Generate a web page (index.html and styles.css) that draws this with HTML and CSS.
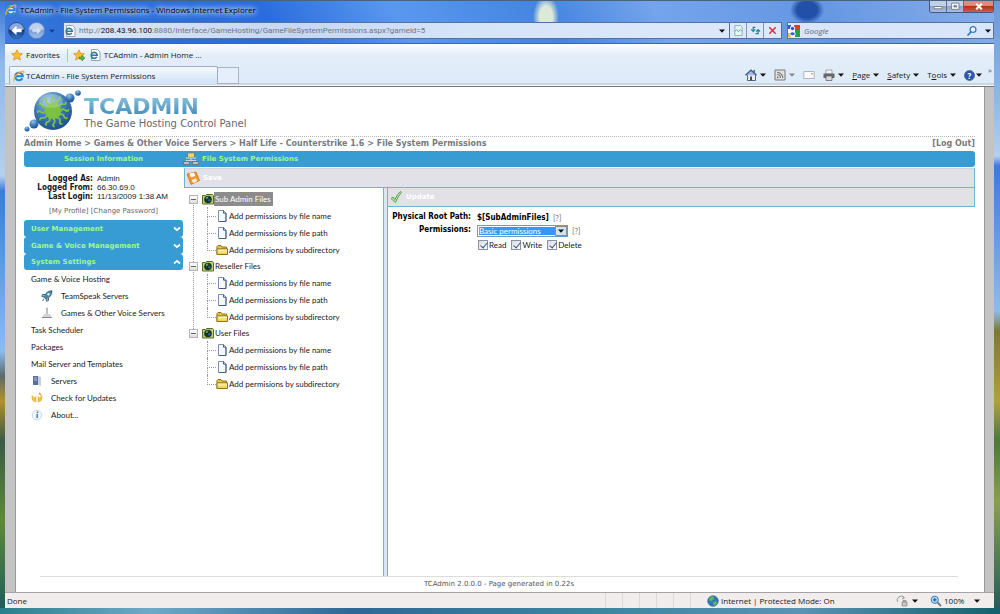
FILE: index.html
```html
<!DOCTYPE html>
<html lang="en">
<head>
    <meta charset="UTF-8">
    <meta name="viewport" content="width=device-width, initial-scale=1.0">
    <title>TCAdmin - File System Permissions</title>
    <link rel="stylesheet" href="styles.css">
</head>
<body>
    <svg class="sprite" aria-hidden="true">
        <defs>
            <linearGradient id="folderFill" x1="0" y1="0" x2="0" y2="1"><stop offset="0" stop-color="#fffbc0"/><stop offset="1" stop-color="#f0cc38"/></linearGradient>
            <radialGradient id="orb" cx=".4" cy=".25" r=".8"><stop offset="0" stop-color="#9cc4e6"/><stop offset=".5" stop-color="#3c7cb8"/><stop offset="1" stop-color="#1c4a88"/></radialGradient>
        </defs>
        <symbol id="i-ie" viewBox="0 0 12 12">
            <circle cx="6" cy="6.400" r="4.800" fill="#d8ecfc"/>
            <path d="M9.400 8.200A3.800 3.800 0 1 1 9.800 6.300H3.200" fill="none" stroke="#2a83d2" stroke-width="2"/>
            <path d="M1.300 11C-.6 8.800 5 1.800 9.400 1.100c1.800-.3 1.800 1.100 1 2.600" fill="none" stroke="#f0b428" stroke-width="1.200"/>
        </symbol>
        <symbol id="i-iepage" viewBox="0 0 12 12">
            <path d="M2.500.5h6L11 3v8.500H2.500z" fill="#fff" stroke="#9aa3ad"/>
            <path d="M7.800 7.900A3 3 0 1 1 8.200 6.300H2.400" fill="none" stroke="#2e7c98" stroke-width="1.600"/>
        </symbol>
        <symbol id="i-star" viewBox="0 0 12 12">
            <path d="M6 .8 7.600 4.300l3.800.4-2.800 2.600.8 3.800L6 9.200l-3.400 1.900.8-3.800L.6 4.700l3.800-.4z" fill="#fbc02d" stroke="#d98a1c" stroke-width=".7"/>
        </symbol>
        <symbol id="i-doc" viewBox="0 0 12 12">
            <path d="M2.500.5h5l2.500 2.700v8.300H2.500z" fill="#f4f8ff" stroke="#7c8faf"/>
            <path d="M7.500.5v2.700H10v8.300H3" fill="none" stroke="#4a5c84"/>
        </symbol>
        <symbol id="i-folder" viewBox="0 0 12 12">
            <path d="M1 10.500V2.500L2 1.500h3l1 1.500h4.500v2" fill="#e8c43c" stroke="#8a7420"/>
            <path d="M1 4.800h10.500v5.700H1z" fill="url(#folderFill)" stroke="#8a7420"/>
        </symbol>
        <symbol id="i-root" viewBox="0 0 12 12">
            <path d="M.5 2.500h3l1-1h6l1 1v8.500H.5z" fill="#c3cf6a" stroke="#5c6b2a"/>
            <circle cx="6" cy="6.500" r="3.800" fill="#14352a"/>
            <path d="M3.600 5q1.400-2 3-1.200l-.8 1.700-1.600.6z" fill="#4fb06c"/>
            <circle cx="7.300" cy="7.300" r="1.200" fill="#2c62a0"/>
        </symbol>
        <symbol id="i-down" viewBox="0 0 6 4"><path d="M0 .5h6L3 3.800z" fill="currentColor"/></symbol>
        <symbol id="i-chevron" viewBox="0 0 8 6"><path d="M1 1.500 4 4.200l3-2.700" fill="none" stroke="#fff" stroke-width="1.700"/></symbol>
    </svg>

    <div class="window">
        <header class="titlebar">
            <svg class="icon"><use href="#i-ie"/></svg>
            <span class="window-title">TCAdmin - File System Permissions - Windows Internet Explorer</span>
            <div class="window-controls">
                <button class="win-btn" aria-label="Minimize"><svg viewBox="0 0 10 8"><path d="M1.500 4h7v2h-7z" fill="#fff" stroke="#525c70" stroke-width=".6"/></svg></button>
                <button class="win-btn" aria-label="Maximize"><svg viewBox="0 0 10 8"><path d="M2 1h6.500v5.500H2zM4 3v1.500h2.500V3z" fill="#fff" fill-rule="evenodd" stroke="#525c70" stroke-width=".6"/></svg></button>
                <button class="win-btn win-close" aria-label="Close"><svg viewBox="0 0 10 8"><path d="m2.500 1.500 5 5m0-5-5 5" stroke="#fff" stroke-width="1.800"/></svg></button>
            </div>
        </header>

        <div class="navbar">
            <button class="round back" aria-label="Back"><svg viewBox="0 0 16 16"><path d="M2.500 8 8 3v3.200h5.500v3.600H8V13z" fill="#fff"/></svg></button>
            <button class="round forward" aria-label="Forward"><svg viewBox="0 0 16 16"><path d="M13 8 8.500 4v2.700h-5v2.600h5V12z" fill="#d5e1f1"/></svg></button>
            <svg class="caret nav-caret"><use href="#i-down"/></svg>
            <div class="address">
                <svg class="icon"><use href="#i-iepage"/></svg>
                <a class="url" href="#">http://<b>208.43.96.100</b>:8880/Interface/GameHosting/GameFileSystemPermissions.aspx?gameid=5</a>
                <svg class="caret"><use href="#i-down"/></svg>
            </div>
            <div class="address-buttons">
                <button aria-label="Compatibility View"><svg viewBox="0 0 12 12"><path d="M2 .5h6l2 2V11.500H2z" fill="#e9f4f5" stroke="#7fb0b6"/><path d="m2 7 2-2 2 2.500L8 5l2 2" fill="none" stroke="#5fa3a8"/></svg></button>
                <button aria-label="Refresh"><svg viewBox="0 0 12 12"><path d="M6 2.500H3.500v4M1.300 4.800l2.200 2.200 2.200-2.200M6 9.500h2.800v-4M6.600 7.200 8.800 5 11 7.200" fill="none" stroke="#2d7f95" stroke-width="1.300"/></svg></button>
                <button aria-label="Stop"><svg viewBox="0 0 12 12"><path d="m2.500 2.500 7 7m0-7-7 7" stroke="#d03438" stroke-width="1.600"/></svg></button>
            </div>
            <div class="searchbox">
                <svg class="icon" viewBox="0 0 12 12"><path d="M0 0h12v12H0z" fill="#fff"/><path d="M6 0h6v5H6z" fill="#d8402c"/><path d="M7 5h5v7H7z" fill="#28a048"/><path d="M0 0h3v4H0z" fill="#2c62d0"/><path d="M0 8h3v4H0z" fill="#f2bc20"/><circle cx="4.500" cy="3.500" r="2.200" fill="#2c62d0" stroke="#fff"/><ellipse cx="4.500" cy="8.800" rx="2.700" ry="2" fill="#2c62d0" stroke="#fff"/></svg>
                <input type="text" aria-label="Search" placeholder="Google">
                <svg class="icon" viewBox="0 0 12 12"><circle cx="7" cy="4.500" r="2.900" fill="#eef6ff" stroke="#3b78c4" stroke-width="1.300"/><path d="M5 6.800 1.500 10.500" stroke="#3b78c4" stroke-width="1.700"/></svg>
                <svg class="caret"><use href="#i-down"/></svg>
            </div>
        </div>

        <div class="client">
            <div class="toolbars">
                <div class="favorites">
                    <svg class="icon"><use href="#i-star"/></svg>
                    <a href="#">Favorites</a>
                    <span class="divider"></span>
                    <svg class="icon" viewBox="0 0 12 12"><use href="#i-star"/><path d="M6 8h3V6l3 3-3 3v-2H6z" fill="#54b848" stroke="#2f8a2c" stroke-width=".5"/></svg>
                    <svg class="icon"><use href="#i-iepage"/></svg>
                    <a href="#">TCAdmin - Admin Home ...</a>
                </div>
                <div class="tabrow">
                    <button class="tab"><svg class="icon"><use href="#i-ie"/></svg>TCAdmin - File System Permissions</button>
                    <button class="newtab" aria-label="New Tab"></button>
                    <div class="commands">
                        <button aria-label="Home"><svg class="icon" viewBox="0 0 12 12"><path d="M2.500 5.500v6h8v-6" fill="#e8edf5" stroke="#526691"/><path d="M8.500 3V1H10v3" fill="#526691"/><path d="M.5 6.200 6 1l5.500 5.200" fill="#a9b9d8" stroke="#39508a" stroke-width="1.200"/><path d="M5 7.500h2v4H5z" fill="#5d4a35"/></svg><svg class="caret"><use href="#i-down"/></svg></button>
                        <button aria-label="Feeds"><svg class="icon" viewBox="0 0 12 12"><path d="M1 1h10v10H1z" fill="#e2e2e2" stroke="#777"/><path d="M3 5.500A3.500 3.500 0 0 1 6.500 9M3 3.200A5.800 5.800 0 0 1 8.800 9" fill="none" stroke="#777" stroke-width="1.100"/><circle cx="3.700" cy="8.400" r=".9" fill="#777"/></svg><svg class="caret muted"><use href="#i-down"/></svg></button>
                        <button aria-label="Read Mail"><svg class="icon" viewBox="0 0 12 12"><path d="M.8 2.500h10.400v7H.8z" fill="#fafafa" stroke="#b4b4ba"/><path d="M8 4h2v1.500H8z" fill="#d9a890"/></svg></button>
                        <button aria-label="Print"><svg class="icon" viewBox="0 0 12 12"><path d="M3 1h6v4H3z" fill="#f4f4f4" stroke="#888" stroke-width=".7"/><path d="M.5 4.500h11V9H.5z" fill="#66696e"/><path d="M3 7h6v4.500H3z" fill="#d8dadd" stroke="#55585d" stroke-width=".7"/></svg><svg class="caret"><use href="#i-down"/></svg></button>
                        <button><span><u>P</u>age</span><svg class="caret"><use href="#i-down"/></svg></button>
                        <button><span><u>S</u>afety</span><svg class="caret"><use href="#i-down"/></svg></button>
                        <button><span>T<u>o</u>ols</span><svg class="caret"><use href="#i-down"/></svg></button>
                        <button class="help" aria-label="Help"><span class="help-ball">?</span><svg class="caret"><use href="#i-down"/></svg></button>
                        <span class="more">»</span>
                    </div>
                </div>
            </div>

            <div class="viewport">
                <div class="page">
                    <div class="brand">
                        <svg class="brand-mark" viewBox="0 0 58 43">
                            <circle cx="29" cy="22" r="19" fill="url(#orb)"/>
                            <circle cx="46" cy="9" r="4.500" fill="url(#orb)"/>
                            <circle cx="54" cy="4" r="2.800" fill="url(#orb)"/>
                            <circle cx="10" cy="35" r="4.500" fill="url(#orb)"/>
                            <circle cx="3" cy="40" r="2.500" fill="url(#orb)"/>
                            <circle cx="29" cy="22" r="8" fill="#7cc142"/>
                            <g fill="none" stroke="#7cc142" stroke-width="1.800" stroke-linecap="round">
                                <path id="ray" d="M29 14.500q-3-2-1-4.500t0-3.500"/>
                                <use href="#ray" transform="rotate(30 29 22)"/><use href="#ray" transform="rotate(60 29 22)"/><use href="#ray" transform="rotate(90 29 22)"/>
                                <use href="#ray" transform="rotate(120 29 22)"/><use href="#ray" transform="rotate(150 29 22)"/><use href="#ray" transform="rotate(180 29 22)"/>
                                <use href="#ray" transform="rotate(210 29 22)"/><use href="#ray" transform="rotate(240 29 22)"/><use href="#ray" transform="rotate(270 29 22)"/>
                                <use href="#ray" transform="rotate(300 29 22)"/><use href="#ray" transform="rotate(330 29 22)"/>
                            </g>
                            <ellipse cx="27" cy="12" rx="12" ry="7" fill="#fff" opacity=".2"/>
                        </svg>
                        <div class="brand-text">
                            <span class="brand-name">TCADMIN</span>
                            <span class="brand-sub">The Game Hosting Control Panel</span>
                        </div>
                    </div>

                    <div class="crumbs">
                        <nav><a href="#">Admin Home</a> &gt; <a href="#">Games &amp; Other Voice Servers</a> &gt; <a href="#">Half Life - Counterstrike 1.6</a> &gt; <a href="#">File System Permissions</a></nav>
                        <a href="#">[Log Out]</a>
                    </div>

                    <div class="headbar">
                        <h2 class="head-session">Session Information</h2>
                        <svg class="head-icon" viewBox="0 0 16 14"><path d="M8 6v3M3 11V8.500h10V11" fill="none" stroke="#c9d6dd"/><path d="M4.500.8h7v4.700h-7z" fill="#e6d85c" stroke="#6e7b80"/><path d="M3 6h10" stroke="#dfe5e8"/><path d="M.5 9.500h6v3h-6zM9.500 9.500h6v3h-6z" fill="#b9c1c8" stroke="#5f6c76" stroke-width=".8"/></svg>
                        <h1>File System Permissions</h1>
                    </div>

                    <div class="columns">
                        <aside class="sidebar">
                            <dl class="session">
                                <dt>Logged As:</dt><dd>Admin</dd>
                                <dt>Logged From:</dt><dd>66.30.69.0</dd>
                                <dt>Last Login:</dt><dd>11/13/2009 1:38 AM</dd>
                            </dl>
                            <p class="profile-links"><a href="#">[My Profile]</a> <a href="#">[Change Password]</a></p>
                            <button class="accordion">User Management<svg><use href="#i-chevron"/></svg></button>
                            <button class="accordion">Game &amp; Voice Management<svg><use href="#i-chevron"/></svg></button>
                            <button class="accordion open">System Settings<svg><use href="#i-chevron"/></svg></button>
                            <ul class="menu">
                                <li><a href="#">Game &amp; Voice Hosting</a></li>
                                <li class="sub"><a href="#"><svg viewBox="0 0 12 12"><path d="M11 .8C7 .8 4 3.500 3 7l2 2c3.500-1 6-4 6-8.200z" fill="#4d86a0" stroke="#27506a" stroke-width=".7"/><path d="M4 4.500H1.500L.8 6.500 3 7M7.500 8v2.500l-2 .7L5 9M3 8.500l-1.500 2.500" fill="#8fb7c8" stroke="#27506a" stroke-width=".8"/><circle cx="7.500" cy="4.300" r="1.200" fill="#e9f3f8"/></svg>TeamSpeak Servers</a></li>
                                <li class="sub"><a href="#"><svg viewBox="0 0 12 12"><path d="M6 1v6" stroke="#999" stroke-width="1.200"/><circle cx="6" cy="1.800" r="1.200" fill="#bbb"/><path d="M3 7h6l2 4H1z" fill="#d5d5d5"/><path d="M1 10.500h10" stroke="#888"/></svg>Games &amp; Other Voice Servers</a></li>
                                <li><a href="#">Task Scheduler</a></li>
                                <li><a href="#">Packages</a></li>
                                <li><a href="#">Mail Server and Templates</a></li>
                                <li><a href="#"><svg viewBox="0 0 12 12"><path d="M2 1h5v9H2z" fill="#5b6f9c"/><path d="M7 1l3 1v9L7 10z" fill="#c6cedd"/><path d="M3 3h3M3 5h3" stroke="#c8d3ec" stroke-width=".8"/></svg>Servers</a></li>
                                <li><a href="#"><svg viewBox="0 0 12 12"><path d="M1 3.500 3.500 6 5 4.500V10Q1 9.500 1 6zM11 3.500 8.500 6 7 4.500V10q4-.5 4-4z" fill="#f5c23a" stroke="#d8a040" stroke-width=".5"/><path d="m8 1 2 2" stroke="#e88a2a" stroke-width="1.200"/></svg>Check for Updates</a></li>
                                <li><a href="#"><svg viewBox="0 0 12 12"><circle cx="6" cy="6" r="4.800" fill="#eef5fa" stroke="#cfdbe4"/><path d="M6.200 5v4M6.500 2.600v1.300" stroke="#3584b4" stroke-width="1.500"/></svg>About...</a></li>
                            </ul>
                        </aside>

                        <main class="main">
                            <div class="toolbar">
                                <button><svg viewBox="0 0 14 14"><path d="m1 3 9-2 3.500 8.500L5 13.500z" fill="#f2972e" stroke="#c56a14" stroke-width=".7"/><path d="m3.500 2.500 4.500-1 1.200 3.500-4.500 1.200z" fill="#fff"/><path d="m5.500 9 4.500-1.800 1.300 3-4 2z" fill="#fdebd0"/></svg>Save</button>
                            </div>
                            <div class="panes">
                                <ul class="tree">
                                    <li class="group">
                                        <div class="root"><button class="toggle" aria-label="Collapse"></button><svg><use href="#i-root"/></svg><a class="selected" href="#">Sub Admin Files</a></div>
                                        <ul>
                                            <li><svg><use href="#i-doc"/></svg><a href="#">Add permissions by file name</a></li>
                                            <li><svg><use href="#i-doc"/></svg><a href="#">Add permissions by file path</a></li>
                                            <li><svg><use href="#i-folder"/></svg><a href="#">Add permisions by subdirectory</a></li>
                                        </ul>
                                    </li>
                                    <li class="group">
                                        <div class="root"><button class="toggle" aria-label="Collapse"></button><svg><use href="#i-root"/></svg><a href="#">Reseller Files</a></div>
                                        <ul>
                                            <li><svg><use href="#i-doc"/></svg><a href="#">Add permissions by file name</a></li>
                                            <li><svg><use href="#i-doc"/></svg><a href="#">Add permissions by file path</a></li>
                                            <li><svg><use href="#i-folder"/></svg><a href="#">Add permisions by subdirectory</a></li>
                                        </ul>
                                    </li>
                                    <li class="group">
                                        <div class="root"><button class="toggle" aria-label="Collapse"></button><svg><use href="#i-root"/></svg><a href="#">User Files</a></div>
                                        <ul>
                                            <li><svg><use href="#i-doc"/></svg><a href="#">Add permissions by file name</a></li>
                                            <li><svg><use href="#i-doc"/></svg><a href="#">Add permissions by file path</a></li>
                                            <li><svg><use href="#i-folder"/></svg><a href="#">Add permisions by subdirectory</a></li>
                                        </ul>
                                    </li>
                                </ul>
                                <div class="splitter"></div>
                                <section class="detail">
                                    <div class="toolbar">
                                        <button><svg viewBox="0 0 14 14"><path d="M2 8.500 4 7l2 2.500Q8 4 11.500 1.500l1 .7Q9 6.500 6.500 12.500z" fill="#b9dfb0" stroke="#4f9a4c" stroke-width=".9"/></svg>Update</button>
                                    </div>
                                    <form class="form">
                                        <span class="form-label">Physical Root Path:</span>
                                        <div class="field"><b>$[SubAdminFiles]</b><a href="#">[?]</a></div>
                                        <label class="form-label" for="perm">Permissions:</label>
                                        <div class="field">
                                            <span class="select">
                                                <select id="perm"><option>Basic permissions</option></select>
                                                <svg class="caret" viewBox="0 0 6 4"><use href="#i-down" width="6" height="4"/></svg>
                                            </span>
                                            <a href="#">[?]</a>
                                        </div>
                                        <div class="checks">
                                            <label><input type="checkbox" checked>Read</label>
                                            <label><input type="checkbox" checked>Write</label>
                                            <label><input type="checkbox" checked>Delete</label>
                                        </div>
                                    </form>
                                </section>
                            </div>
                        </main>
                    </div>

                    <footer class="page-footer">TCAdmin 2.0.0.0 - Page generated in 0.22s</footer>
                </div>
            </div>

            <div class="statusbar">
                <span class="status-text">Done</span>
                <div class="status-cells"><i></i><i></i><i></i><i></i><i></i><i></i></div>
                <div class="zone"><svg class="icon" viewBox="0 0 12 12"><circle cx="6" cy="6" r="5.300" fill="#2f78c0" stroke="#2a5580" stroke-width=".6"/><path d="M2 3.500Q4 1 6.500 1.200L7 4 4.500 6 2 5.500zM6 7l3.500-.8 1 1.500-2.500 3-1.500-.5z" fill="#5cb857"/></svg>Internet | Protected Mode: On</div>
                <div class="privacy"><svg class="icon" viewBox="0 0 12 12"><path d="M1.500 7A4 4 0 0 1 8 2.500M6 .8l2.500 2-2.500 1.500" fill="none" stroke="#9a9a9a"/><path d="M6 7h5v4H6zM7 7V5.500h3V7" fill="#c6c6c6" stroke="#8a8a8a" stroke-width=".8"/></svg><svg class="caret"><use href="#i-down"/></svg></div>
                <div class="zoom"><svg class="icon" viewBox="0 0 12 12"><path d="m7 7 4 4" stroke="#777" stroke-width="1.800"/><circle cx="4.800" cy="4.800" r="3.600" fill="#b8dcf8" stroke="#3b78b4"/><path d="M4.800 3v3.600M3 4.800h3.600" stroke="#1f5f9c" stroke-width="1.200"/></svg>100%<svg class="caret"><use href="#i-down"/></svg></div>
            </div>
        </div>
    </div>
</body>
</html>
```
FILE: styles.css
```css
* {
    box-sizing: border-box;
}
body {
    margin: 0;
    font-family: "Open Sans", "Noto Sans", sans-serif;
    font-size: 8px;
    line-height: 10px;
    color: #1a1a1a;
}
h1, h2, p, ul, dl, dd {
    margin: 0;
    padding: 0;
}
ul {
    list-style: none;
}
a {
    color: inherit;
    text-decoration: none;
}
button {
    margin: 0;
    padding: 0;
    border: 0;
    background: none;
    font: inherit;
    color: inherit;
    cursor: pointer;
}
svg {
    display: block;
    flex: none;
}
.sprite {
    position: absolute;
    width: 0;
    height: 0;
}
.icon {
    width: 12px;
    height: 12px;
}
.caret {
    width: 6px;
    height: 4px;
    color: #111;
}
.caret.muted {
    color: #888;
}

/* Window frame */
.window {
    display: flex;
    flex-direction: column;
    min-height: 100vh;
    padding: 0 6px 6px 5px;
    border-top: 1px solid #4b617c;
    background:
        linear-gradient(90deg, #2b7f8c, #6fa9c8 15%, #2f6796 35%, #3c86a0 60%, #5b93b4 80%, #14606c) bottom / 100% 6px no-repeat,
        linear-gradient(#3a78d8 0, #8db9ea 60px, #b4d0ee 175px, #3c7cd8 190px, #8cbcf0 350px, #5b6a6a 375px, #b09030 400px, #3a5a44 440px, #5c8a38 520px, #1d5a5c 100%) left / 5px 100% no-repeat,
        linear-gradient(#6f98d8 0, #8db9ea 100px, #b4d0ee 155px, #3c7cd8 165px, #8cbcf0 310px, #7c7a30 330px, #b0a040 400px, #4a7a3a 440px, #8aa04a 500px, #1d5a5c 100%) right / 6px 100% no-repeat,
        radial-gradient(ellipse 17px 14px at 807px 9px, #2250a8 60%, transparent) no-repeat,
        radial-gradient(ellipse 13px 22px at 546px 16px, #dce8d8 50%, transparent) no-repeat,
        linear-gradient(60deg, #3470cc 0, #5a90e4 15%, #2e70d8 30%, #2a6cdc 45%, #5a98f0 55%, #4484e0 66%, #74a4ec 74%, #6497e2 86%, #88aee8 100%);
}
.titlebar {
    display: flex;
    gap: 3px;
    height: 21px;
}
.titlebar .icon {
    margin-top: 3px;
}
.window-title {
    align-self: flex-start;
    margin-top: 3px;
    line-height: 12px;
    color: #000;
    text-shadow: 0 0 4px #fff, 0 0 6px #fff, 0 0 8px #cfe0ff;
}
.window-controls {
    display: flex;
    height: 12px;
    margin-left: auto;
    border: 1px solid #47577a;
    border-top: 0;
    border-radius: 0 0 3px 3px;
    overflow: hidden;
}
.win-btn {
    display: grid;
    place-items: center;
    width: 17px;
    border-right: 1px solid #5d6c8c;
    background: linear-gradient(#c3d1e8 45%, #8ea4c8 50%, #a9bede);
}
.win-btn svg {
    width: 12px;
    height: 9px;
}
.win-close {
    width: 29px;
    border-right: 0;
    background: linear-gradient(#dc8d80 40%, #b8301c 50%, #d06048);
}
.navbar {
    display: flex;
    align-items: center;
    height: 17px;
    margin-bottom: 4px;
}
.round {
    width: 17px;
    height: 17px;
    border: 1px solid #2d4f8c;
    border-radius: 50%;
}
.round svg {
    width: 15px;
    height: 15px;
}
.back {
    margin-left: 3px;
    background: linear-gradient(#8ca8dc 40%, #17327c 50%, #2f78c8);
}
.forward {
    margin-left: 3px;
    border-color: #6c8fc8;
    background: linear-gradient(#bcd0ee 40%, #7c9cd0 50%, #9fc0ec);
}
.nav-caret {
    margin: 0 8px 0 4px;
    color: #1c3f86;
}
.address, .searchbox {
    display: flex;
    align-items: center;
    height: 17px;
    border: 1px solid #56719f;
}
.address {
    flex: 1;
    gap: 3px;
    padding: 0 4px 0 0;
    background: linear-gradient(90deg, #dbe7f8, #c6d7f4 35%, #d6e4f8 60%, #dce8fa);
}
.url {
    flex: 1;
    font-family: Roboto, sans-serif;
    color: #6f7480;
}
.url b {
    font-weight: 400;
    color: #101010;
}
.address-buttons {
    display: flex;
    height: 17px;
    margin-right: 5px;
    border: 1px solid #56719f;
    border-left: 0;
}
.address-buttons button {
    display: grid;
    place-items: center;
    width: 17px;
    border-right: 1px solid #7d93b8;
    background: #dde8f8;
}
.address-buttons button:last-child {
    border-right: 0;
}
.address-buttons svg {
    width: 11px;
    height: 11px;
}
.searchbox {
    width: 207px;
    padding: 0 2px 0 0;
    gap: 4px;
    background: #d9e5f8;
}
.searchbox input {
    flex: 1;
    min-width: 0;
    padding: 0;
    border: 0;
    outline: 0;
    background: none;
    font: inherit;
}
.searchbox input::placeholder {
    color: #5f6672;
    font-style: italic;
}
.searchbox .caret {
    margin-left: 3px;
}

/* Browser toolbars */
.client {
    display: flex;
    flex: 1;
    flex-direction: column;
    border-top: 1px solid #3d67a8;
    background: #fff;
}
.toolbars {
    height: 43px;
    border-bottom: 1px solid #707880;
    background: linear-gradient(#fdfeff, #e2edf9 12px, #deebf8 39px, #b4bac2 40px, #f4f6f8 41px);
}
.favorites {
    display: flex;
    align-items: center;
    height: 22px;
    padding-left: 6px;
}
.favorites .icon + a {
    margin-left: 3px;
}
.divider {
    height: 13px;
    margin: 0 5px 0 7px;
    border-left: 1px solid #d8b8a8;
}
.favorites .icon + .icon {
    margin-left: 4px;
}
.tabrow {
    display: flex;
    height: 18px;
    padding-left: 4px;
}
.tab {
    display: flex;
    align-items: center;
    gap: 1px;
    width: 209px;
    padding-left: 3px;
    border: 1px solid #a3afc0;
    border-bottom: 0;
    border-radius: 2px 2px 0 0;
    background: linear-gradient(#f4f9ff, #cfe2f8);
}
.newtab {
    width: 21px;
    margin-top: 1px;
    border: 1px solid #a8b4c4;
    border-left: 0;
    background: #e4effb;
}
.commands {
    display: flex;
    align-items: center;
    margin-left: auto;
    padding-right: 2px;
}
.commands button {
    display: flex;
    align-items: center;
    gap: 3px;
    margin-right: 8px;
}
.commands .help {
    margin-right: 6px;
    gap: 1px;
}
.help-ball {
    width: 11px;
    height: 11px;
    border: 1px solid #5a6f9c;
    border-radius: 50%;
    background: #2c54ac;
    color: #fff;
    font-weight: 700;
    line-height: 9px;
}
.more {
    align-self: flex-start;
    line-height: 8px;
    color: #44587c;
}

/* Page shown in the browser */
.viewport {
    display: flex;
    flex: 1;
    padding: 0 10px 0 11px;
    background: #c3c3c4;
    font-family: Lato, sans-serif;
}
.page {
    display: flex;
    flex: 1;
    flex-direction: column;
    padding: 2px 9px 4px 8px;
    border: solid #99999c;
    border-width: 0 1px;
    margin: 0 -1px;
    background: #fff;
}
.brand {
    display: flex;
    height: 48px;
    border-bottom: 1px dotted #b8b8b8;
}
.brand-mark {
    width: 58px;
    height: 43px;
}
.brand-text {
    display: flex;
    flex-direction: column;
    padding: 7px 0 0 2px;
    font-family: "DejaVu Sans", sans-serif;
}
.brand-name {
    font-size: 22px;
    font-weight: 700;
    line-height: 22px;
    background: linear-gradient(#8cc4dc, #3c86b8);
    background-clip: text;
    -webkit-background-clip: text;
    color: transparent;
}
.brand-sub {
    font-size: 10px;
    line-height: 11px;
    color: #68686c;
}
.crumbs {
    display: flex;
    justify-content: space-between;
    height: 14px;
    font-family: "DejaVu Sans", sans-serif;
    font-size: 8px;
    font-weight: 700;
    line-height: 13px;
    color: #7a7a7a;
}
.headbar {
    display: flex;
    align-items: center;
    height: 16px;
    border-radius: 3px;
    background: #389cd4;
    font-family: "DejaVu Sans", sans-serif;
    color: #a0f890;
}
.headbar h1, .headbar h2 {
    font-size: 7px;
    font-weight: 700;
}
.head-session {
    width: 159px;
    text-align: center;
}
.head-icon {
    width: 16px;
    height: 14px;
    margin-right: 3px;
}
.columns {
    display: flex;
    flex: 1;
    gap: 1px;
    padding-top: 1px;
}

/* Left menu */
.sidebar {
    width: 159px;
}
.session {
    display: grid;
    grid-template-columns: 69px 1fr;
    column-gap: 4px;
    padding-top: 6px;
    line-height: 9px;
}
.session dt {
    font-family: "DejaVu Sans Condensed", "DejaVu Sans", sans-serif;
    font-weight: 700;
    text-align: right;
}
.session dd {
    font-family: "Liberation Sans", sans-serif;
}
.profile-links {
    padding: 5px 0 4px;
    font-family: "DejaVu Sans", sans-serif;
    font-size: 7px;
    text-align: center;
    color: #666;
}
.accordion {
    display: flex;
    align-items: center;
    justify-content: space-between;
    width: 100%;
    height: 17px;
    padding: 0 2px 0 7px;
    border-radius: 3px;
    background: #389cd4;
    font-family: "DejaVu Sans", sans-serif;
    font-size: 7px;
    font-weight: 700;
    color: #a0f890;
}
.accordion svg {
    width: 8px;
    height: 6px;
}
.accordion.open {
    height: 16px;
}
.accordion.open svg {
    transform: rotate(180deg);
}
.menu {
    padding-left: 7px;
}
.menu a {
    display: flex;
    align-items: center;
    height: 17px;
}
.menu svg {
    width: 12px;
    height: 12px;
    margin-right: 8px;
}
.menu .sub {
    padding-left: 10px;
}

/* Permissions panel */
.main {
    display: flex;
    flex: 1;
    flex-direction: column;
}
.toolbar {
    display: flex;
    align-items: center;
    height: 20px;
    padding-left: 1px;
    border: 1px solid #6cb4d8;
    border-top-color: #d4d4dc;
    background: #e2e1e7;
}
.toolbar button {
    display: flex;
    align-items: center;
    gap: 3px;
    font-family: "DejaVu Sans", sans-serif;
    font-size: 7px;
    font-weight: 700;
    color: #fff;
}
.toolbar svg {
    width: 14px;
    height: 14px;
}
.panes {
    display: flex;
    flex: 1;
}
.tree {
    width: 199px;
    padding: 3px 0 0 5px;
}
.group {
    position: relative;
}
.group:not(:last-child)::before {
    content: "";
    position: absolute;
    top: 8px;
    left: 4px;
    height: 100%;
    border-left: 1px dotted #999;
}
.root {
    display: flex;
    align-items: center;
    height: 16px;
}
.root svg, .group li svg {
    width: 12px;
    height: 12px;
}
.toggle {
    position: relative;
    width: 9px;
    height: 9px;
    margin-right: 4px;
    border: 1px solid #b4b4b4;
    background: linear-gradient(#fff, #ddd);
}
.toggle::before {
    content: "";
    position: absolute;
    top: 3px;
    left: 1px;
    width: 5px;
    height: 1px;
    background: #666;
}
.root a {
    padding: 0 2px 0 1px;
    line-height: 14px;
}
.root .selected {
    background: #8c8c8c;
    color: #fff;
}
.group ul {
    padding-left: 18px;
}
.group li {
    position: relative;
    display: flex;
    align-items: center;
    height: 17px;
    padding-left: 9px;
}
.group li::before {
    content: "";
    position: absolute;
    top: 0;
    left: 0;
    width: 8px;
    height: 9px;
    border: dotted #999;
    border-width: 0 0 1px 1px;
}
.group li:not(:last-child)::after {
    content: "";
    position: absolute;
    top: 9px;
    left: 0;
    height: 8px;
    border-left: 1px dotted #999;
}
.group li a {
    margin-left: 1px;
}
.splitter {
    width: 4px;
    border-left: 1px solid #6cb4d8;
    background: #dce6ee;
}
.detail {
    flex: 1;
    border-left: 1px solid #6cb4d8;
}
.detail .toolbar {
    height: 19px;
    border-top: 0;
    border-left: 0;
}
.form {
    display: grid;
    grid-template-columns: 83px 1fr;
    column-gap: 6px;
    padding-top: 4px;
}
.form-label, .field b {
    font-family: "DejaVu Sans Condensed", "DejaVu Sans", sans-serif;
    font-weight: 700;
    line-height: 12px;
    text-align: right;
    color: #000;
}
.field {
    display: flex;
    align-items: center;
    gap: 4px;
    height: 13px;
}
.field a {
    color: #777;
}
.select {
    position: relative;
    width: 91px;
    height: 12px;
    padding: 1px;
    border: 1px solid #6c9cc4;
    background: #fff;
}
.select select {
    display: block;
    width: 77px;
    height: 8px;
    padding: 0;
    border: 0;
    border-radius: 0;
    appearance: none;
    background: #3399ff;
    font: inherit;
    line-height: 8px;
    color: #fff;
}
.select .caret {
    position: absolute;
    top: 0;
    right: 0;
    width: 12px;
    height: 10px;
    padding: 2px;
    border: 1px solid #8c8c8c;
    background: #e0e0e0;
    pointer-events: none;
}
.checks {
    display: flex;
    grid-column: 2;
    gap: 5px;
    padding: 2px 0 0 1px;
}
.checks label {
    display: flex;
    align-items: center;
    gap: 1px;
    height: 11px;
}
.checks input {
    width: 10px;
    height: 10px;
    margin: 0;
    border: 1px solid #8a94a0;
    appearance: none;
    background: linear-gradient(135deg, #d6dce2, #fff);
}
.checks input:checked::before {
    content: "";
    display: block;
    width: 3px;
    height: 6px;
    margin: 0 0 0 3px;
    border: solid #3c4f96;
    border-width: 0 1px 1px 0;
    transform: rotate(40deg);
}
.page-footer {
    margin: 0 17px 0 16px;
    padding-top: 3px;
    border-top: 1px solid #ddd;
    font-family: "DejaVu Sans", sans-serif;
    font-size: 7px;
    line-height: 8px;
    text-align: center;
    color: #555;
}

/* Status bar */
.statusbar {
    display: flex;
    align-items: center;
    height: 16px;
    border-top: 1px solid #a4a4a8;
    background: #f0edec;
}
.status-text {
    flex: 1;
    padding-left: 2px;
}
.status-cells {
    display: flex;
}
.status-cells i {
    width: 17px;
    height: 15px;
    border-left: 1px solid #dcdad8;
}
.zone, .privacy, .zoom {
    display: flex;
    align-items: center;
    gap: 2px;
}
.zone {
    width: 189px;
}
.privacy {
    width: 34px;
    gap: 4px;
}
.zoom {
    width: 64px;
}
.zoom .caret {
    margin-left: 8px;
}
```
